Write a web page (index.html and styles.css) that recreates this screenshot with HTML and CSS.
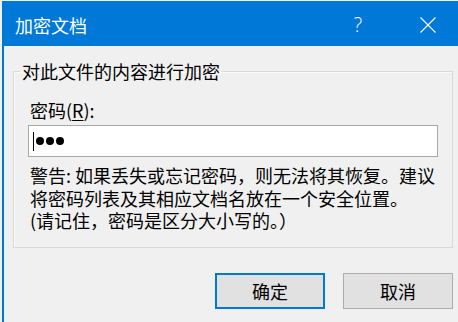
FILE: index.html
```html
<!DOCTYPE html>
<html lang="zh-CN">
<head>
<meta charset="utf-8">
<title>加密文档</title>
<link rel="stylesheet" href="styles.css">
</head>
<body>
<div class="window">
  <div class="titlebar">
    <span class="title">加密文档</span>
    <span class="help">?</span>
    <span class="close">
      <svg width="16" height="16" viewBox="0 0 16 16"><path d="M0.5 0.5 L15.5 15.5 M15.5 0.5 L0.5 15.5" stroke="#fff" stroke-width="1.1" fill="none"/></svg>
    </span>
  </div>
  <div class="client">
    <fieldset class="group">
      <legend class="group-title">对此文件的内容进行加密</legend>
      <div class="group-body">
        <label class="field-label">密码(<u>R</u>):</label>
        <div class="pwd"><span class="caret"></span><span class="dot"></span><span class="dot"></span><span class="dot"></span></div>
        <p class="warning">警告: 如果丢失或忘记密码，则无法将其恢复。建议<br>将密码列表及其相应文档名放在一个安全位置。<br>(请记住，密码是区分大小写的。）</p>
      </div>
    </fieldset>
    <div class="actions">
      <button class="btn btn-primary">确定</button>
      <button class="btn">取消</button>
    </div>
  </div>
</div>
</body>
</html>
```
FILE: styles.css
```css
* { box-sizing: border-box; }
html, body {
  margin: 0;
  padding: 0;
}
body {
  width: 458px;
  height: 322px;
  overflow: hidden;
  background: #f0f0f0;
  padding-top: 1px;
  font-family: "Noto Sans CJK SC", "Noto Sans", sans-serif;
  font-size: 18px;
  color: #000;
}
.window {
  margin-left: 2px;
  border-left: 2px solid #0078d7;
  height: 321px;
  background: #f0f0f0;
}
.titlebar {
  height: 45px;
  background: #0078d7;
  color: #fff;
  display: flex;
  align-items: center;
  padding: 2px 7px 0 11px;
}
.title {
  flex: 1;
  font-size: 18px;
  line-height: 22px;
  font-weight: 400;
}
.help {
  width: 46px;
  margin-right: 24px;
  text-align: center;
  font-family: "Open Sans", "Noto Sans", sans-serif;
  font-weight: 300;
  font-size: 20px;
  line-height: 22px;
}
.close {
  width: 46px;
  display: flex;
  justify-content: center;
  align-items: center;
}
.close svg { display: block; }
.client {
  padding: 14px 5px 0 0;
}
.group {
  margin: 0 0 0 9px;
  width: 440px;
  padding: 0;
  border: 1px solid #d9d9d9;
  box-shadow: inset 1px 1px 0 #fafafa;
  min-width: 0;
}
.group-title {
  margin-left: 6px;
  padding: 0 2px;
  line-height: 22px;
}
.group-body {
  padding: 17px 14px 15px 16px;
}
.field-label {
  display: block;
  line-height: 22px;
}
.field-label u {
  text-decoration-thickness: 1px;
  text-underline-offset: 2px;
}
.pwd {
  margin: 4px 0 0 -2px;
  width: 410px;
  height: 32px;
  background: #fff;
  border: 1px solid #a8a8a8;
  display: flex;
  align-items: center;
  gap: 2px;
  padding-left: 4px;
}
.caret {
  width: 1px;
  height: 19px;
  background: #000;
  margin-right: 0;
}
.dot {
  width: 8px;
  height: 8px;
  border-radius: 50%;
  background: #000;
}
.warning {
  margin: 7px 0 0 0;
  line-height: 22.5px;
  white-space: nowrap;
}
.actions {
  display: flex;
  justify-content: flex-end;
  gap: 18px;
  margin-top: 25px;
}
.btn {
  width: 110px;
  height: 36px;
  background: #e1e1e1;
  border: 1px solid #adadad;
  font-family: inherit;
  font-size: 18px;
  color: #000;
  padding: 0;
  line-height: 22px;
}
.btn-primary {
  border: 2px solid #0078d7;
}
```
